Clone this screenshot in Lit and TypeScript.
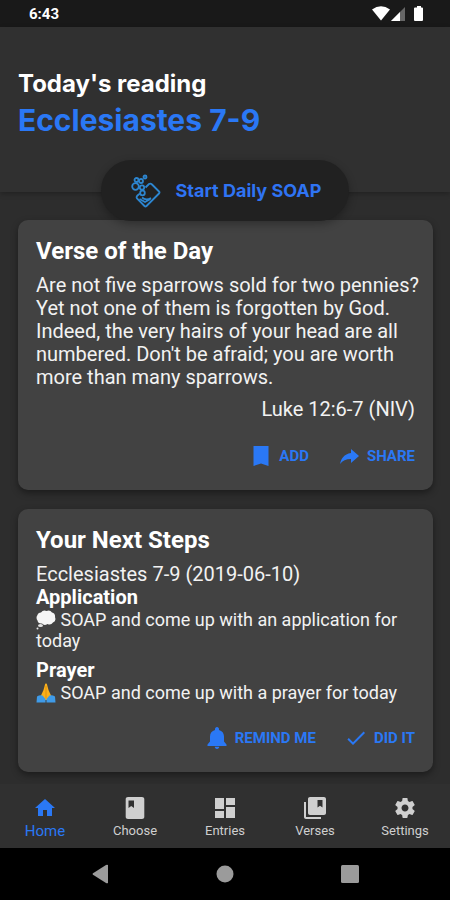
import { LitElement, html, svg, css } from "lit";
import { customElement, property, state } from "lit/decorators.js";
import { classMap } from "lit/directives/class-map.js";

const glyphs: Record<string, string> = {
  bookmark: "M4.500 2H19.500V22L12 19.500L4.500 22z",
  share: "M14 5v4C7 10 4 15 3 20c2.500-3.500 6-5.100 11-5.100V19l8-7z",
  bell: "M12 23c1.300 0 2.200-.9 2.200-2.200H9.800C9.800 22.100 10.700 23 12 23zm7-7.500v-5c0-3.500-1.900-5.800-5-6.600V3.200C14 2 13.200 1 12 1s-2 1-2 2.200v.7c-3.100.8-5 3.100-5 6.600v5L2.500 18.500v1.500h19v-1.500z",
  check: "M9 16.170L4.830 12l-1.420 1.410L9 19 21 7l-1.410-1.410z",
  home: "M10 20v-6h4v6h5v-8h3L12 3 2 12h3v8z",
  book: "M19 1H5C3.700 1 2.700 1.900 2.700 3v18c0 1.100 1 2 2.300 2h14c1.300 0 2.300-.9 2.300-2V3c0-1.100-1-2-2.300-2zM5.500 4.500H11V12L8.250 10L5.500 12z",
  dashboard: "M2 13h9V2H2v11zm0 9h9v-7H2v7zm11 0h9V11h-9v11zm0-20v7h9V2h-9z",
  collections: "M3 6H1v15c0 1.100.9 2 2 2h15v-2H3V6zM21 1H7C5.900 1 5 1.900 5 3v14c0 1.100.9 2 2 2h14c1.100 0 2-.9 2-2V3c0-1.100-.9-2-2-2zm-1.500 10.500L17 9.800l-2.500 1.700V4h5z",
  settings: "M19.430 12.980c.04-.32.07-.64.07-.98s-.03-.66-.07-.98l2.110-1.650c.19-.15.24-.42.12-.64l-2-3.460c-.12-.22-.39-.3-.61-.22l-2.490 1c-.52-.4-1.080-.73-1.690-.98l-.38-2.650C14.460 2.180 14.250 2 14 2h-4c-.25 0-.46.18-.49.42l-.38 2.650c-.61.25-1.170.59-1.690.98l-2.490-1c-.23-.09-.49 0-.61.22l-2 3.460c-.13.22-.07.49.12.64l2.110 1.650c-.04.32-.07.65-.07.98s.03.66.07.98l-2.110 1.650c-.19.15-.24.42-.12.64l2 3.460c.12.22.39.3.61.22l2.490-1c.52.4 1.080.73 1.690.98l.38 2.650c.03.24.24.42.49.42h4c.25 0 .46-.18.49-.42l.38-2.650c.61-.25 1.170-.59 1.690-.98l2.490 1c.23.09.49 0 .61-.22l2-3.460c.12-.22.07-.49-.12-.64l-2.110-1.650zM12 15.500c-1.930 0-3.500-1.570-3.500-3.500s1.570-3.500 3.500-3.500 3.500 1.570 3.500 3.500-1.570 3.500-3.500 3.500z",
};

@customElement("app-icon")
class AppIcon extends LitElement {
  @property() name = "home";
  static styles = css`
    :host { display: inline-flex; width: 24px; height: 24px; flex: none; }
    svg { width: 100%; height: 100%; fill: currentColor; }
  `;
  render() {
    return html`<svg viewBox="0 0 24 24" aria-hidden="true">${svg`<path fill-rule="evenodd" d=${glyphs[this.name]}></path>`}</svg>`;
  }
}

const soapLogo = html`
  <svg class="logo" viewBox="0 0 30 34" aria-hidden="true">
    <path d="M14.500 13.500 L18 10 Q19.500 9 21 10.500 L28 17.500 Q29 18.500 28 19.500 L15.500 32 Q14.500 33 13.500 32 L6 24.500 Q5 23 6.500 21.500 L9 19.500"></path>
    <path d="M8.500 25 L14 28 L19.500 25 M11 23.500 Q15 27 20 24"></path>
    <circle cx="4.500" cy="12.500" r="3.300"></circle>
    <circle cx="11" cy="13.500" r="2.200"></circle>
    <circle cx="5.500" cy="6" r="2"></circle>
    <circle cx="10" cy="7" r="2"></circle>
    <circle cx="14" cy="3" r="1.500"></circle>
    <circle cx="11.500" cy="19" r="2.300"></circle>
  </svg>`;

const thought = html`
  <svg class="emoji" viewBox="0 0 20 20" role="img" aria-label="Thought">
    <path fill="#f5f5f5" d="M5 2.500Q7-.3 10.500 1Q14-.5 16 2.500Q19.500 3.500 19 7Q20.500 11 17 12.500Q15 15.500 11.500 14Q8 16 6 13.500Q2 14 1.500 10.500Q-.5 7.500 1.500 5Q2 2.500 5 2.500z"></path>
    <ellipse cx="4.500" cy="15.500" rx="2.500" ry="1.500" fill="#e3e3e3"></ellipse>
    <circle cx="1.500" cy="18.500" r="1" fill="#e3e3e3"></circle>
  </svg>`;

const hands = html`
  <svg class="emoji" viewBox="0 0 20 20" role="img" aria-label="Folded hands">
    <path fill="#fbb01b" d="M9.200.8Q10 .3 10.800.8L12.500 7L15 12.500L13.500 17H6.500L5 12.500L7.500 7z"></path>
    <path fill="none" stroke="#d98b0c" stroke-width=".8" d="M10 3V15.500"></path>
    <path fill="#3f9be8" d="M1 13.500Q4 11.500 6.500 12.500L9.500 16V19.500H.5zM19 13.500Q16 11.500 13.500 12.500L10.500 16V19.500H19.500z"></path>
  </svg>`;

@customElement("app-root")
class AppRoot extends LitElement {
  @state() private tab = "Home";

  static styles = css`
    :host {
      display: flex;
      flex-direction: column;
      min-height: 100vh;
      background: #2d2d2d;
      color: #f2f2f2;
      font-family: Roboto, "Liberation Sans", sans-serif;
    }
    * { box-sizing: border-box; }
    h1, h2, h3, p { margin: 0; }
    button { border: 0; padding: 0; background: none; font: inherit; color: inherit; cursor: pointer; }
    .status {
      display: flex; align-items: center; justify-content: space-between;
      height: 27px; padding: 0 26px 0 29px; background: #191919;
      font-size: 15px; font-weight: 700; color: #fff;
    }
    .signals { width: 52px; height: 18px; }
    .header {
      height: 165px; padding: 42px 18px 0; background: #303030;
      box-shadow: 0 2px 5px rgba(0, 0, 0, 0.25);
      font-family: Inter, Roboto, sans-serif;
    }
    .header p { font-size: 24px; line-height: 30px; font-weight: 700; color: #fff; }
    .header h1 { font-size: 30px; line-height: 42px; font-weight: 700; color: #2a78f5; }
    .start {
      position: relative;
      align-self: center; display: flex; align-items: center; gap: 15px;
      height: 61px; padding: 0 28px 0 30px; margin-top: -32px; border-radius: 31px;
      background: #212121; color: #2f74f3;
      box-shadow: 0 3px 8px rgba(0, 0, 0, 0.3);
      font-family: Inter, Roboto, sans-serif; font-size: 18px; font-weight: 700;
    }
    .logo { width: 30px; height: 34px; fill: none; stroke: #2d86d0; stroke-width: 1.8; }
    main { flex: 1; display: flex; flex-direction: column; gap: 19px; margin-top: -1px; padding: 0 17px 12px 18px; }
    .card {
      padding: 16px 18px 22px; border-radius: 10px; background: #424242;
      box-shadow: 0 3px 7px rgba(0, 0, 0, 0.4);
    }
    .card h2 { font-size: 24px; line-height: 30px; font-weight: 700; color: #fff; margin-bottom: 8px; }
    .verse { font-size: 20px; line-height: 23px; margin-right: -8px; }
    .source { font-size: 20px; line-height: 23px; margin-top: 9px; text-align: right; }
    .card h3 { font-size: 20px; line-height: 23px; font-weight: 700; color: #fff; }
    .step { font-size: 18px; line-height: 21px; }
    .step + h3 { margin-top: 8px; }
    .emoji { width: 20px; height: 20px; vertical-align: -4px; }
    .actions { display: flex; justify-content: flex-end; gap: 28px; margin-top: 23px; }
    .actions button {
      display: flex; align-items: center; gap: 6px; height: 24px;
      color: #2a78f5; font-size: 15px; font-weight: 700;
    }
    .tabs { display: grid; grid-template-columns: repeat(5, 1fr); height: 64px; background: #303030; }
    .tabs button {
      display: flex; flex-direction: column; align-items: center; padding-top: 12px;
      font-size: 13px; line-height: 22px; color: #cfcfcf;
    }
    .tabs button.active { color: #2a78f5; font-size: 15px; }
    .system { display: flex; justify-content: center; align-items: center; gap: 101px; height: 52px; background: #000; }
    .system button { display: flex; }
    .system svg { width: 24px; height: 24px; fill: #9b9b9b; }
  `;

  private action(icon: string, label: string) {
    return html`<button><app-icon name=${icon}></app-icon>${label}</button>`;
  }

  render() {
    const tabs = [["Home", "home"], ["Choose", "book"], ["Entries", "dashboard"], ["Verses", "collections"], ["Settings", "settings"]];
    return html`
      <div class="status">
        <span>6:43</span>
        <svg class="signals" viewBox="0 0 52 18" fill="#fff" aria-hidden="true">
          <path d="M0 4.500Q9-2 18 4.500L9 15.500z"></path>
          <path fill="#666" d="M33 2V16H19z"></path>
          <path d="M28 7V16H19z"></path>
          <path d="M43 2.500h2V1h4v1.500h1q1 0 1 1V15q0 1-1 1h-7q-1 0-1-1V3.500q0-1 1-1z"></path>
        </svg>
      </div>
      <header class="header">
        <p>Today's reading</p>
        <h1>Ecclesiastes 7-9</h1>
      </header>
      <button class="start">${soapLogo}<span>Start Daily SOAP</span></button>
      <main>
        <section class="card">
          <h2>Verse of the Day</h2>
          <p class="verse">Are not five sparrows sold for two pennies? Yet not one of them is forgotten by God. Indeed, the very hairs of your head are all numbered. Don't be afraid; you are worth more than many sparrows.</p>
          <p class="source">Luke 12:6-7 (NIV)</p>
          <div class="actions">${this.action("bookmark", "ADD")}${this.action("share", "SHARE")}</div>
        </section>
        <section class="card">
          <h2>Your Next Steps</h2>
          <p class="verse">Ecclesiastes 7-9 (2019-06-10)</p>
          <h3>Application</h3>
          <p class="step">${thought} SOAP and come up with an application for today</p>
          <h3>Prayer</h3>
          <p class="step">${hands} SOAP and come up with a prayer for today</p>
          <div class="actions">${this.action("bell", "REMIND ME")}${this.action("check", "DID IT")}</div>
        </section>
      </main>
      <nav class="tabs">
        ${tabs.map(([label, icon]) => html`
          <button class=${classMap({ active: this.tab === label })} @click=${() => (this.tab = label)}>
            <app-icon name=${icon}></app-icon><span>${label}</span>
          </button>`)}
      </nav>
      <div class="system">
        <button aria-label="Back"><svg viewBox="0 0 24 24"><path d="M20 3V21Q19 21.500 18 21L5 12.800Q4 12 5 11.200L18 3Q19 2.500 20 3z"></path></svg></button>
        <button aria-label="Overview home"><svg viewBox="0 0 24 24"><circle cx="12" cy="12" r="8.500"></circle></svg></button>
        <button aria-label="Recent apps"><svg viewBox="0 0 24 24"><rect x="3" y="3" width="18" height="18" rx="1.500"></rect></svg></button>
      </div>
    `;
  }
}
